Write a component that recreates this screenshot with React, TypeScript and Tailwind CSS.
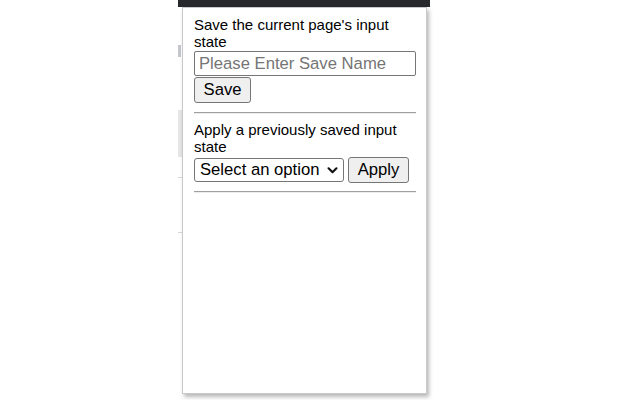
export default function App() {
  return (
    <div className="relative w-[640px] h-[400px] overflow-hidden bg-white font-['Liberation_Sans',Arial,sans-serif] text-black">
      {/* page behind the popup */}
      <div className="flex flex-col pl-[178px]">
        <div className="w-[252px] h-[7px] bg-[#27282b]" />
        <div className="mt-[38px] w-[3px] h-[12px] bg-[#c4c7cc]" />
        <div className="mt-[53px] w-[4px] h-[47px] bg-[#e6e6e6]" />
        <div className="mt-[20px] w-[4px] h-px bg-[#d6d6d6]" />
        <div className="mt-[54px] w-[4px] h-px bg-[#d6d6d6]" />
      </div>

      {/* extension popup */}
      <div className="absolute left-[182px] top-[7px] w-[245px] h-[387px] bg-white border border-[#c9c9c9] shadow-[2px_3px_4px_rgba(0,0,0,0.28)] pt-[8px] pl-[11px] pr-[10px]">
        <p className="text-[15px] leading-[17px]">Save the current page's input state</p>
        <input
          type="text"
          placeholder="Please Enter Save Name"
          className="block mt-px w-[222px] h-[25px] px-[4px] text-[16.67px] border border-[#767676] rounded-[2px] bg-white placeholder:text-[#757575] outline-none"
        />
        <button className="block mt-px w-[57px] h-[26px] text-[16.67px] leading-none bg-[#efefef] border border-[#767676] rounded-[3px]">
          Save
        </button>
        <div className="mt-[9px] w-[222px] h-[2px] border-t border-[#a0a0a0] border-b border-b-[#ececec]" />

        <p className="mt-[7px] text-[15px] leading-[17px]">Apply a previously saved input state</p>
        <div className="mt-[2px] flex items-center gap-[4px]">
          <div className="relative w-[150px] h-[24px]">
            <select className="appearance-none w-full h-full pl-[5px] text-[16.67px] leading-none bg-white border border-[#767676] rounded-[3px] outline-none">
              <option>Select an option</option>
            </select>
            <svg
              viewBox="0 0 12 8"
              className="absolute right-[6px] top-[9px] w-[11px] h-[7px] pointer-events-none"
              fill="none"
              stroke="#111"
              strokeWidth="2.4"
              strokeLinecap="round"
              strokeLinejoin="round"
            >
              <path d="M1.5 1.5 6 6l4.5-4.5" />
            </svg>
          </div>
          <button className="w-[61px] h-[26px] text-[16.67px] leading-none bg-[#efefef] border border-[#767676] rounded-[3px]">
            Apply
          </button>
        </div>
        <div className="mt-[8px] w-[222px] h-[2px] border-t border-[#a0a0a0] border-b border-b-[#ececec]" />
      </div>
    </div>
  );
}
